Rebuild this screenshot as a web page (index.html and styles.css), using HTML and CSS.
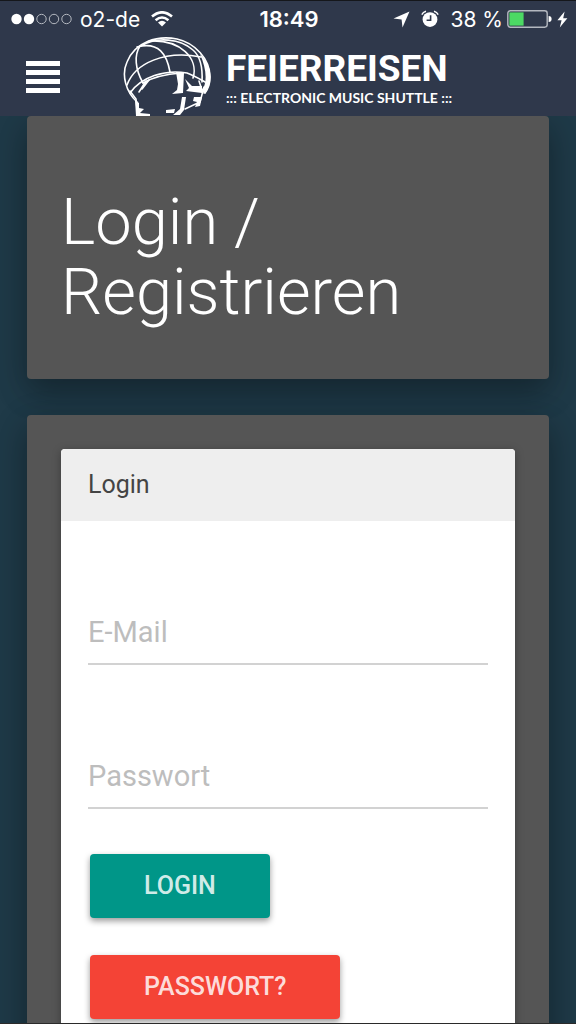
FILE: index.html
```
<!DOCTYPE html>
<html lang="de">
<head>
    <meta charset="UTF-8">
    <meta name="viewport" content="width=device-width, initial-scale=1.0">
    <title>Feierreisen - Login / Registrieren</title>
    <link rel="stylesheet" href="styles.css">
</head>
<body>
    <header>
        <div class="status-bar">
            <div class="status-left">
                <svg width="62" height="12" viewBox="0 0 62 12" aria-hidden="true">
                    <g fill="#fff">
                        <circle cx="6.5" cy="6" r="5.2"/>
                        <circle cx="19" cy="6" r="5.2"/>
                    </g>
                    <g fill="none" stroke="#b4b8c0">
                        <circle cx="31.5" cy="6" r="4.7"/>
                        <circle cx="44" cy="6" r="4.7"/>
                        <circle cx="56.5" cy="6" r="4.7"/>
                    </g>
                </svg>
                <span class="carrier">o2-de</span>
                <svg width="22" height="16" viewBox="0 0 22 16" aria-hidden="true">
                    <g fill="none" stroke="#fff" stroke-width="2.6">
                        <path d="M1 5.6 Q11 -3 21 5.6"/>
                        <path d="M4.6 9.2 Q11 3.8 17.4 9.2"/>
                    </g>
                    <path d="M7 11.4 Q11 8.2 15 11.4 L11 15.6 Z" fill="#fff"/>
                </svg>
            </div>
            <span class="clock">18:49</span>
            <div class="status-right">
                <svg width="17" height="17" viewBox="0 0 17 17" aria-hidden="true">
                    <path d="M16.5 0.5 L9.5 16.5 L8.6 8.6 L0.5 7.6 Z" fill="#fff"/>
                </svg>
                <svg class="alarm" width="18" height="18" viewBox="0 0 18 18" aria-hidden="true">
                    <circle cx="9" cy="9.6" r="7.4" fill="#fff"/>
                    <path d="M9.6 5.2 V10.2 H5.6" fill="none" stroke="#2f384b" stroke-width="1.6"/>
                    <path d="M0.8 4.6 Q2 2 5 1.2 M17.2 4.6 Q16 2 13 1.2" fill="none" stroke="#fff" stroke-width="1.4"/>
                </svg>
                <span class="percent">38 %</span>
                <svg class="battery" width="45" height="18" viewBox="0 0 45 18" aria-hidden="true">
                    <rect x="0.8" y="0.8" width="39.4" height="16.4" rx="2.6" fill="none" stroke="#b4b8c0" stroke-width="1.4"/>
                    <rect x="2.4" y="2.4" width="14.2" height="13.2" fill="#4cd964"/>
                    <path d="M41.6 6 Q44.6 6 44.6 9 Q44.6 12 41.6 12 Z" fill="#fff"/>
                </svg>
                <svg width="11" height="17" viewBox="0 0 11 17" aria-hidden="true">
                    <path d="M7.6 0.4 L0.4 9.2 H4.6 L2.8 16.6 L10.4 7.2 H6.2 Z" fill="#fff"/>
                </svg>
            </div>
        </div>

        <nav class="nav-bar">
            <button type="button" class="menu-button" aria-label="Menü">
                <span></span>
                <span></span>
                <span></span>
                <span></span>
            </button>
            <a href="#" class="logo">
                <svg width="90" height="80" viewBox="0 0 90 80" aria-hidden="true">
                    <g fill="none" stroke="#fff" stroke-width="1.6" stroke-linecap="round">
                        <!-- globe outline -->
                        <path d="M14 65 C3 55 -2 38 4 25 C12 5 34 -2 54 2 C72 6 87 22 87 40 C87 47 85 52 82 56"/>
                        <path d="M18 9 C34 -1 58 2 70 13 C77 19 80 28 79 45"/>
                        <!-- meridians -->
                        <path d="M17 9 C11 18 12 32 20 46"/>
                        <path d="M14 10 C36 4 44 18 47 35"/>
                        <path d="M26 4 C58 2 76 22 70 41"/>
                        <!-- parallels -->
                        <path d="M4 48 C12 26 42 13 78 20"/>
                        <path d="M7 56 C18 40 42 32 64 36 C70 38 75 41 82 45"/>
                        <path d="M20 46 C32 39 44 37 58 36"/>
                        <path d="M7 54 L13 62 L14 72"/>
                        <path d="M16 55 L23 44 M19 52 L26 43"/>
                        <path d="M62 72 L77 65 L81 50 M76 44 L80 56"/>
                    </g>
                    <g fill="#fff">
                        <path d="M77 17 C89 29 91 43 82 57 L79 54 C85 44 83 31 77 17 Z"/>
                        <path d="M53 35 L61 36 L60 56 L49 57 L54 53 L55 47 Z"/>
                        <path d="M62 42 L69 49 L79 49 L79 56 L63 54 L66 51 Z"/>
                        <path d="M59 60 L63 60 L61 73 L57 78 H50 L57 72 Z"/>
                        <path d="M71 60 L79 60 L77 69 L72 70 L74 65 L70 64 Z"/>
                        <path d="M12 63 L16 66 L16 71 L21 72 L17 76 L27 77 V79 H13 Z"/>
                        <path d="M43 73 L52 72 L51 76 L43 76 Z"/>
                    </g>
                </svg>
                <span class="logo-text">
                    <span class="logo-name">FEIERREISEN</span>
                    <span class="logo-claim">::: ELECTRONIC MUSIC SHUTTLE :::</span>
                </span>
            </a>
        </nav>
    </header>

    <main>
        <section class="well">
            <h1>Login / Registrieren</h1>
        </section>

        <section class="well">
            <div class="panel">
                <h2 class="panel-heading">Login</h2>
                <form class="panel-body">
                    <input type="email" id="email" name="email" placeholder="E-Mail" aria-label="E-Mail">
                    <input type="password" id="password" name="password" placeholder="Passwort" aria-label="Passwort">
                    <button type="button" class="btn btn-primary">LOGIN</button>
                    <button type="button" class="btn btn-danger">PASSWORT?</button>
                </form>
            </div>
        </section>
    </main>
</body>
</html>
```

FILE: styles.css
```
* {
    box-sizing: border-box;
}

body {
    font-family: Roboto, "Liberation Sans", sans-serif;
    margin: 0;
    height: 100vh;
    display: flex;
    flex-direction: column;
    overflow: hidden;
    background-color: #1f3a48;
    border-top: 1px solid #15171b;
    border-bottom: 1px solid #2a2a2a;
}

/* Header */
header {
    flex: none;
    background-color: #2f384b;
    color: #fff;
}

.status-bar {
    display: grid;
    grid-template-columns: 1fr auto 1fr;
    align-items: center;
    height: 36px;
    padding: 0 8px 0 10px;
    font-family: Inter, Roboto, sans-serif;
    font-size: 21px;
}

.status-left, .status-right {
    display: flex;
    align-items: center;
}

.status-right {
    justify-content: flex-end;
}

.carrier {
    margin: 0 11px 0 8px;
}

.clock {
    font-size: 22px;
    font-weight: 600;
}

.alarm {
    margin: 0 12px 0 11px;
}

.battery {
    margin: 0 5px 0 4px;
}

.nav-bar {
    display: flex;
    height: 79px;
    padding: 0 26px;
}

.menu-button {
    display: flex;
    flex-direction: column;
    gap: 4px;
    width: 34px;
    margin-top: 24px;
    padding: 0;
    border: none;
    background: none;
    cursor: pointer;
}

.menu-button span {
    width: 100%;
    height: 5px;
    background-color: #fff;
}

.logo {
    display: flex;
    gap: 13px;
    margin-left: 63px;
    color: #fff;
    text-decoration: none;
}

.logo-text {
    display: flex;
    flex-direction: column;
    padding-top: 13px;
}

.logo-name {
    font-size: 37px;
    font-weight: 700;
    line-height: 38px;
}

.logo-claim {
    font-family: Lato, sans-serif;
    font-size: 14px;
    font-weight: 700;
    line-height: 20px;
    white-space: nowrap;
}

/* Content */
main {
    flex: 1;
    min-height: 0;
    padding: 0 27px;
    overflow: hidden;
}

.well {
    display: flow-root;
    margin-bottom: 36px;
    padding: 34px;
    background-color: #555;
    border-radius: 4px;
    box-shadow: 0 14px 30px rgba(0, 0, 0, 0.2), 0 10px 36px rgba(0, 0, 0, 0.19);
}

h1 {
    margin: 37px 0 18px;
    color: #fff;
    font-size: 65px;
    font-weight: 300;
    line-height: 70px;
}

.panel {
    background-color: #fff;
    border-radius: 4px;
    box-shadow: 0 2px 10px rgba(0, 0, 0, 0.3);
    overflow: hidden;
}

.panel-heading {
    margin: 0;
    padding: 18px 27px;
    background-color: #eee;
    color: #444;
    font-size: 25px;
    font-weight: 400;
    line-height: 36px;
}

.panel-body {
    display: flex;
    flex-direction: column;
    align-items: flex-start;
    padding: 0 27px 36px;
}

input {
    width: 100%;
    height: 64px;
    margin-top: 80px;
    padding: 0;
    border: none;
    border-bottom: 2px solid #d2d2d2;
    background: none;
    font-family: inherit;
    font-size: 29px;
}

input::placeholder {
    color: #bdbdbd;
    opacity: 1;
}

/* Buttons */
.btn {
    height: 64px;
    margin: 45px 2px 0;
    padding: 0 54px 2px;
    border: none;
    border-radius: 4px;
    box-shadow: 0 3px 6px rgba(0, 0, 0, 0.4);
    color: rgba(255, 255, 255, 0.84);
    font-family: inherit;
    font-size: 25px;
    font-weight: 500;
    cursor: pointer;
}

.btn + .btn {
    margin-top: 37px;
}

.btn-primary {
    background-color: #009688;
}

.btn-danger {
    background-color: #f44336;
}
```
